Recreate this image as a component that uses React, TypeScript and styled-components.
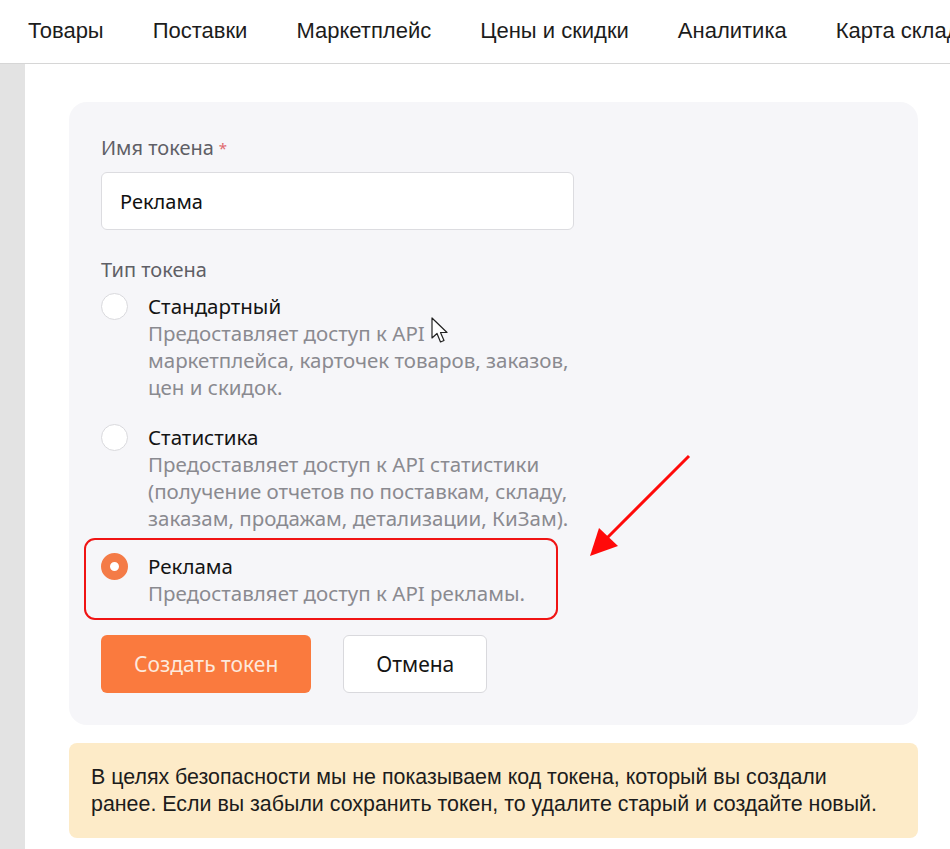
import React from 'react';
import styled, { createGlobalStyle } from 'styled-components';

const GlobalStyle = createGlobalStyle`
    html, body {
        margin: 0;
        padding: 0;
        background: #ffffff;
    }
    body {
        font-family: "Noto Sans", "Open Sans", sans-serif;
        color: #1f1f1f;
    }
`;

const Page = styled.div`
    position: relative;
    width: 950px;
    height: 849px;
    overflow: hidden;
    display: flex;
    flex-direction: column;
`;

const TopNav = styled.nav`
    height: 63px;
    flex-shrink: 0;
    display: flex;
    align-items: center;
    gap: 49px;
    padding-left: 28px;
    border-bottom: 1px solid #d6d6d6;
    white-space: nowrap;
    overflow: hidden;
`;

const NavItem = styled.a`
    font-family: "Liberation Sans", Arial, sans-serif;
    font-size: 22px;
    color: #1c1c1c;
    text-decoration: none;
    margin-top: -2px;
`;

const Body = styled.div`
    flex: 1;
    display: flex;
`;

const SideStrip = styled.div`
    width: 25px;
    flex-shrink: 0;
    background: #e3e3e3;
`;

const Main = styled.main`
    flex: 1;
    padding: 38px 32px 0 44px;
    display: flex;
    flex-direction: column;
    gap: 18px;
`;

const Card = styled.section`
    position: relative;
    background: #f6f6f9;
    border-radius: 18px;
    padding: 34px 32px 32px 32px;
`;

const FieldLabel = styled.div`
    font-size: 20px;
    line-height: 24px;
    color: #5f5f66;
`;

const Required = styled.span`
    color: #e0686d;
    font-size: 15px;
    vertical-align: top;
    margin-left: 5px;
`;

const TextInput = styled.div`
    box-sizing: border-box;
    margin-top: 12px;
    width: 473px;
    height: 58px;
    background: #ffffff;
    border: 1px solid #dcdce0;
    border-radius: 6px;
    padding: 0 18px;
    display: flex;
    align-items: center;
    font-size: 20px;
    color: #111111;
`;

const TypeLabel = styled(FieldLabel)`
    margin-top: 28px;
`;

const OptionList = styled.div`
    margin-top: 11px;
    display: flex;
    flex-direction: column;
    gap: 23px;
`;

const Option = styled.div<{ $highlight?: boolean }>`
    position: relative;
    display: flex;
    gap: 20px;
    width: 470px;
    margin-top: ${(p) => (p.$highlight ? '-2px' : '0')};

    ${(p) =>
        p.$highlight &&
        `
        &::before {
            content: '';
            position: absolute;
            left: -17px;
            top: -15px;
            width: 474px;
            height: 82px;
            border: 2.5px solid #f01414;
            border-radius: 11px;
            box-sizing: border-box;
        }
    `}
`;

const Radio = styled.span<{ $checked?: boolean }>`
    box-sizing: border-box;
    flex-shrink: 0;
    width: 27px;
    height: 27px;
    border-radius: 50%;
    background: #ffffff;
    border: ${(p) => (p.$checked ? '9px solid #f47b47' : '1px solid #d9d9dd')};
`;

const OptionText = styled.div`
    display: flex;
    flex-direction: column;
    white-space: nowrap;
`;

const OptionTitle = styled.div`
    font-size: 20.5px;
    line-height: 27px;
    color: #141414;
`;

const OptionDesc = styled.div`
    font-size: 20.5px;
    line-height: 27px;
    color: #8a8a90;
`;

const Actions = styled.div`
    margin-top: 28px;
    display: flex;
    gap: 32px;
`;

const Button = styled.button<{ $primary?: boolean }>`
    box-sizing: border-box;
    height: 58px;
    padding: 0 ${(p) => (p.$primary ? '33px' : '32px')};
    border-radius: 6px;
    font-family: inherit;
    font-size: 21px;
    cursor: pointer;
    background: ${(p) => (p.$primary ? '#fa7a3e' : '#ffffff')};
    color: ${(p) => (p.$primary ? '#fde9dc' : '#141414')};
    border: ${(p) => (p.$primary ? 'none' : '1px solid #d9d9dd')};
`;

const Notice = styled.div`
    background: #fdebc8;
    border-radius: 8px;
    padding: 21px 22px 20px 22px;
    font-family: "Liberation Sans", Arial, sans-serif;
    font-size: 21.4px;
    line-height: 27px;
    color: #1c1c1c;
    white-space: nowrap;
`;

const Arrow = styled.svg`
    position: absolute;
    left: 516px;
    top: 348px;
`;

const Cursor = styled.svg`
    position: absolute;
    left: 431px;
    top: 317px;
`;

const navItems = ['Товары', 'Поставки', 'Маркетплейс', 'Цены и скидки', 'Аналитика', 'Карта складов'];

const options = [
    {
        title: 'Стандартный',
        desc: ['Предоставляет доступ к API', 'маркетплейса, карточек товаров, заказов,', 'цен и скидок.'],
    },
    {
        title: 'Статистика',
        desc: ['Предоставляет доступ к API статистики', '(получение отчетов по поставкам, складу,', 'заказам, продажам, детализации, КиЗам).'],
    },
    {
        title: 'Реклама',
        desc: ['Предоставляет доступ к API рекламы.'],
        checked: true,
    },
];

const App: React.FC = () => {
    return (
        <Page>
            <GlobalStyle />
            <TopNav>
                {navItems.map((item) => (
                    <NavItem key={item}>{item}</NavItem>
                ))}
            </TopNav>
            <Body>
                <SideStrip />
                <Main>
                    <Card>
                        <FieldLabel>
                            Имя токена<Required>*</Required>
                        </FieldLabel>
                        <TextInput>Реклама</TextInput>
                        <TypeLabel>Тип токена</TypeLabel>
                        <OptionList>
                            {options.map((o) => (
                                <Option key={o.title} $highlight={o.checked}>
                                    <Radio $checked={o.checked} />
                                    <OptionText>
                                        <OptionTitle>{o.title}</OptionTitle>
                                        {o.desc.map((line) => (
                                            <OptionDesc key={line}>{line}</OptionDesc>
                                        ))}
                                    </OptionText>
                                </Option>
                            ))}
                        </OptionList>
                        <Actions>
                            <Button $primary>Создать токен</Button>
                            <Button>Отмена</Button>
                        </Actions>
                        <Arrow width="110" height="112" viewBox="0 0 110 112">
                            <line x1="104" y1="6" x2="22" y2="88" stroke="#ff0a0a" strokeWidth="3" />
                            <polygon points="5,106 14,78 33,96" fill="#ff0a0a" />
                        </Arrow>
                    </Card>
                    <Notice>
                        В целях безопасности мы не показываем код токена, который вы создали
                        <br />
                        ранее. Если вы забыли сохранить токен, то удалите старый и создайте новый.
                    </Notice>
                </Main>
            </Body>
            <Cursor width="20" height="28" viewBox="0 0 20 28">
                <path d="M1 1 L1 21 L6 16.5 L9.5 25 L13 23.5 L9.5 15.5 L16 15.5 Z" fill="#ffffff" stroke="#222222" strokeWidth="1.2" strokeLinejoin="round" />
            </Cursor>
        </Page>
    );
};

export default App;
